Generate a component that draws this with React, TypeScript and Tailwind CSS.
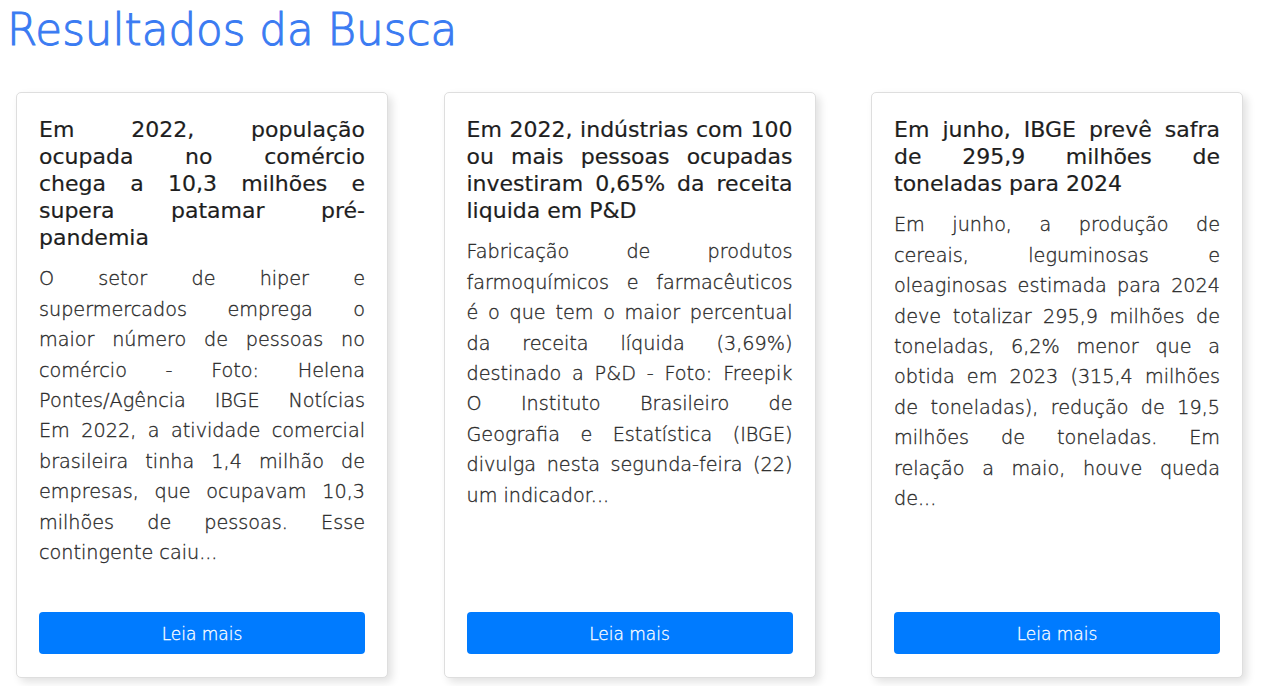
// search results page – titles and excerpts keep the line breaks of the original layout
const results = [
  {
    title: [
      "Em 2022, população",
      "ocupada no comércio",
      "chega a 10,3 milhões e",
      "supera patamar pré-",
      "pandemia",
    ],
    text: [
      "O setor de hiper e",
      "supermercados emprega o",
      "maior número de pessoas no",
      "comércio - Foto: Helena",
      "Pontes/Agência IBGE Notícias",
      "Em 2022, a atividade comercial",
      "brasileira tinha 1,4 milhão de",
      "empresas, que ocupavam 10,3",
      "milhões de pessoas. Esse",
      "contingente caiu...",
    ],
  },
  {
    title: [
      "Em 2022, indústrias com 100",
      "ou mais pessoas ocupadas",
      "investiram 0,65% da receita",
      "liquida em P&D",
    ],
    text: [
      "Fabricação de produtos",
      "farmoquímicos e farmacêuticos",
      "é o que tem o maior percentual",
      "da receita líquida (3,69%)",
      "destinado a P&D - Foto: Freepik",
      "O Instituto Brasileiro de",
      "Geografia e Estatística (IBGE)",
      "divulga nesta segunda-feira (22)",
      "um indicador...",
    ],
  },
  {
    title: ["Em junho, IBGE prevê safra", "de 295,9 milhões de", "toneladas para 2024"],
    text: [
      "Em junho, a produção de",
      "cereais, leguminosas e",
      "oleaginosas estimada para 2024",
      "deve totalizar 295,9 milhões de",
      "toneladas, 6,2% menor que a",
      "obtida em 2023 (315,4 milhões",
      "de toneladas), redução de 19,5",
      "milhões de toneladas. Em",
      "relação a maio, houve queda",
      "de...",
    ],
  },
]

function Lines({ lines }: { lines: string[] }) {
  return (
    <>
      {lines.map((line, i) => (
        <span
          key={i}
          className={
            i === lines.length - 1
              ? "block"
              : "block text-justify [text-align-last:justify]"
          }
        >
          {line}
        </span>
      ))}
    </>
  )
}

export default function App() {
  return (
    <div className="min-h-screen bg-white font-['DejaVu_Sans',sans-serif]">
      <h1 className="pl-[7px] pt-[4px] text-[43.6px] leading-[1.2] font-extralight text-[#3a7bf2] [-webkit-text-stroke:1px_#3a7bf2]">
        Resultados da Busca
      </h1>

      <div className="flex gap-[55.5px] pl-[16px] mt-[36px]">
        {results.map((r, i) => (
          <div
            key={i}
            className="flex flex-col w-[372px] h-[586px] shrink-0 bg-white border border-[#dedede] rounded-[5px] shadow-[4px_4px_8px_rgba(0,0,0,0.12)] px-[22px] pt-[23px] pb-[23px]"
          >
            <h2 className="text-[22px] leading-[27px] text-[#1e1e1e] [-webkit-text-stroke:0.2px_#1e1e1e]">
              <Lines lines={r.title} />
            </h2>
            <p className="mt-[13px] text-[19.2px] leading-[30.4px] font-extralight text-[#2b2b2b] [-webkit-text-stroke:0.35px_#2b2b2b]">
              <Lines lines={r.text} />
            </p>
            <button className="mt-auto h-[42px] w-full pt-[3px] rounded-[4px] bg-[#007bff] text-white text-[17px] font-extralight [-webkit-text-stroke:0.3px_#fff]">
              Leia mais
            </button>
          </div>
        ))}
      </div>
    </div>
  )
}
